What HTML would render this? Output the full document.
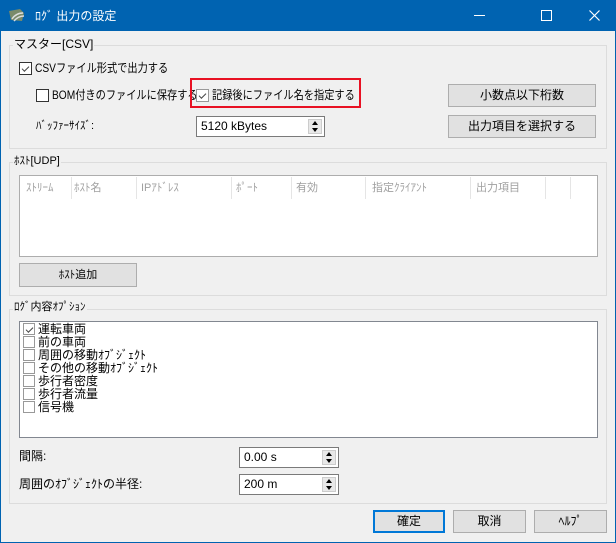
<!DOCTYPE html>
<html><head><meta charset="utf-8"><style>
*{box-sizing:border-box;margin:0;padding:0}
body{width:616px;height:543px;background:#f0f0f0;font-family:"Liberation Sans","Noto Sans CJK JP",sans-serif;font-size:12px;color:#000;position:relative;overflow:hidden}
.a{position:absolute;white-space:nowrap;line-height:14px}
.t{transform:scaleX(.85);transform-origin:0 0}
.win{position:absolute;left:0;top:0;width:616px;height:543px;border:1px solid #0063b1;border-top:none}
.title{position:absolute;left:0;top:0;width:616px;height:31px;background:#0063b1;color:#fff}
.grp{position:absolute;border:1px solid #dcdcdc}
.leg{position:absolute;background:#f0f0f0;padding:0 1px;line-height:14px}
.cb{position:absolute;width:13px;height:13px;border:1px solid #333;background:#fff}
.cb.g{border-color:#999}
.btn{position:absolute;background:#e1e1e1;border:1px solid #adadad;text-align:center;line-height:20px}
.fld{position:absolute;background:#fff;border:1px solid #7a7a7a;padding-left:4px;line-height:19px}
.spin{position:absolute;right:2px;top:2px;width:14px;height:15px;background:#e8e8e8;border:1px solid #ccc}
.spin:before{content:"";position:absolute;left:3px;top:1px;border:3px solid transparent;border-bottom:4px solid #000;border-top:none}
.spin:after{content:"";position:absolute;left:3px;top:8px;border:3px solid transparent;border-top:4px solid #000;border-bottom:none}
.ck:after{content:"";position:absolute;left:2px;top:0px;width:6px;height:3px;border-left:1.5px solid #444;border-bottom:1.5px solid #444;transform:translate(0,3px) rotate(-45deg)}
</style></head><body>
<div class="title">
<svg class="a" style="left:8px;top:7px" width="18" height="16"><path d="M1 4 L12 2 L16 6 L14 14 L3 13Z" fill="#7a8a6a"/><path d="M4 12 Q8 6 15 6 M6 14 Q10 9 16 9" stroke="#ddd" stroke-width="1.5" fill="none"/></svg>
<div class="a" style="left:35px;top:9px;font-size:12px">ﾛｸﾞ 出力の設定</div>
<div class="a" style="left:474px;top:15px;width:11px;height:1px;background:#fff"></div>
<div class="a" style="left:541px;top:10px;width:11px;height:11px;border:1px solid #fff"></div>
<svg class="a" style="left:589px;top:10px" width="11" height="11"><path d="M0.5 0.5L10.5 10.5M10.5 0.5L0.5 10.5" stroke="#fff" stroke-width="1.2"/></svg>
</div>
<div class="win"></div>

<div class="grp" style="left:9px;top:45px;width:598px;height:104px"></div>
<div class="leg" style="left:13px;top:37px">マスター[CSV]</div>
<div class="cb ck" style="left:19px;top:62px"></div>
<div class="a t" style="left:35px;top:61px">CSVファイル形式で出力する</div>
<div class="cb" style="left:36px;top:89px"></div>
<div class="a t" style="left:52px;top:88px">BOM付きのファイルに保存する</div>
<div class="a" style="left:190px;top:78px;width:171px;height:30px;border:2px solid #e81123"></div>
<div class="cb ck g" style="left:196px;top:89px"></div>
<div class="a t" style="left:212px;top:88px">記録後にファイル名を指定する</div>
<div class="a" style="left:36px;top:119px;font-size:11px">ﾊﾞｯﾌｧｰｻｲｽﾞ:</div>
<div class="fld" style="left:196px;top:116px;width:129px;height:21px">5120 kBytes<div class="spin"></div></div>
<div class="btn" style="left:448px;top:84px;width:148px;height:23px">小数点以下桁数</div>
<div class="btn" style="left:448px;top:115px;width:148px;height:23px">出力項目を選択する</div>

<div class="grp" style="left:9px;top:162px;width:598px;height:134px"></div>
<div class="leg" style="left:13px;top:154px;font-size:11px">ﾎｽﾄ[UDP]</div>
<div class="a" style="left:19px;top:175px;width:579px;height:82px;background:#fff;border:1px solid #adadad"></div>
<div class="a" style="left:20px;top:181px;color:#a0a0a0;font-size:11px">
<span class="a" style="left:6px">ｽﾄﾘｰﾑ</span><span class="a" style="left:54px">ﾎｽﾄ名</span><span class="a" style="left:121px">IPｱﾄﾞﾚｽ</span><span class="a" style="left:216px">ﾎﾟｰﾄ</span><span class="a" style="left:276px">有効</span><span class="a" style="left:352px">指定ｸﾗｲｱﾝﾄ</span><span class="a" style="left:456px">出力項目</span>
</div>
<div class="a" style="left:71px;top:177px;width:1px;height:22px;background:#e5e5e5;box-shadow:65px 0 #e5e5e5,160px 0 #e5e5e5,220px 0 #e5e5e5,294px 0 #e5e5e5,399px 0 #e5e5e5,474px 0 #e5e5e5,499px 0 #e5e5e5"></div>
<div class="btn" style="left:19px;top:263px;width:118px;height:24px;line-height:22px;font-size:11px">ﾎｽﾄ追加</div>

<div class="grp" style="left:9px;top:309px;width:598px;height:195px"></div>
<div class="leg" style="left:13px;top:300px;font-size:11px">ﾛｸﾞ内容ｵﾌﾟｼｮﾝ</div>
<div class="a" style="left:19px;top:321px;width:579px;height:117px;background:#fff;border:1px solid #828790"></div>
<div class="cb ck g" style="left:23px;top:323px;width:12px;height:12px"></div><div class="a" style="left:38px;top:322px">運転車両</div>
<div class="cb g" style="left:23px;top:336px;width:12px;height:12px"></div><div class="a" style="left:38px;top:335px">前の車両</div>
<div class="cb g" style="left:23px;top:349px;width:12px;height:12px"></div><div class="a" style="left:38px;top:348px">周囲の移動ｵﾌﾞｼﾞｪｸﾄ</div>
<div class="cb g" style="left:23px;top:362px;width:12px;height:12px"></div><div class="a" style="left:38px;top:361px">その他の移動ｵﾌﾞｼﾞｪｸﾄ</div>
<div class="cb g" style="left:23px;top:375px;width:12px;height:12px"></div><div class="a" style="left:38px;top:374px">歩行者密度</div>
<div class="cb g" style="left:23px;top:388px;width:12px;height:12px"></div><div class="a" style="left:38px;top:387px">歩行者流量</div>
<div class="cb g" style="left:23px;top:401px;width:12px;height:12px"></div><div class="a" style="left:38px;top:400px">信号機</div>
<div class="a" style="left:19px;top:449px">間隔:</div>
<div class="fld" style="left:239px;top:447px;width:100px;height:21px">0.00 s<div class="spin"></div></div>
<div class="a" style="left:19px;top:477px">周囲のｵﾌﾞｼﾞｪｸﾄの半径:</div>
<div class="fld" style="left:239px;top:474px;width:100px;height:21px">200 m<div class="spin"></div></div>

<div class="btn" style="left:373px;top:510px;width:72px;height:23px;border:2px solid #0078d7;line-height:19px">確定</div>
<div class="btn" style="left:453px;top:510px;width:73px;height:23px">取消</div>
<div class="btn" style="left:534px;top:510px;width:73px;height:23px">ﾍﾙﾌﾟ</div>
</body></html>
